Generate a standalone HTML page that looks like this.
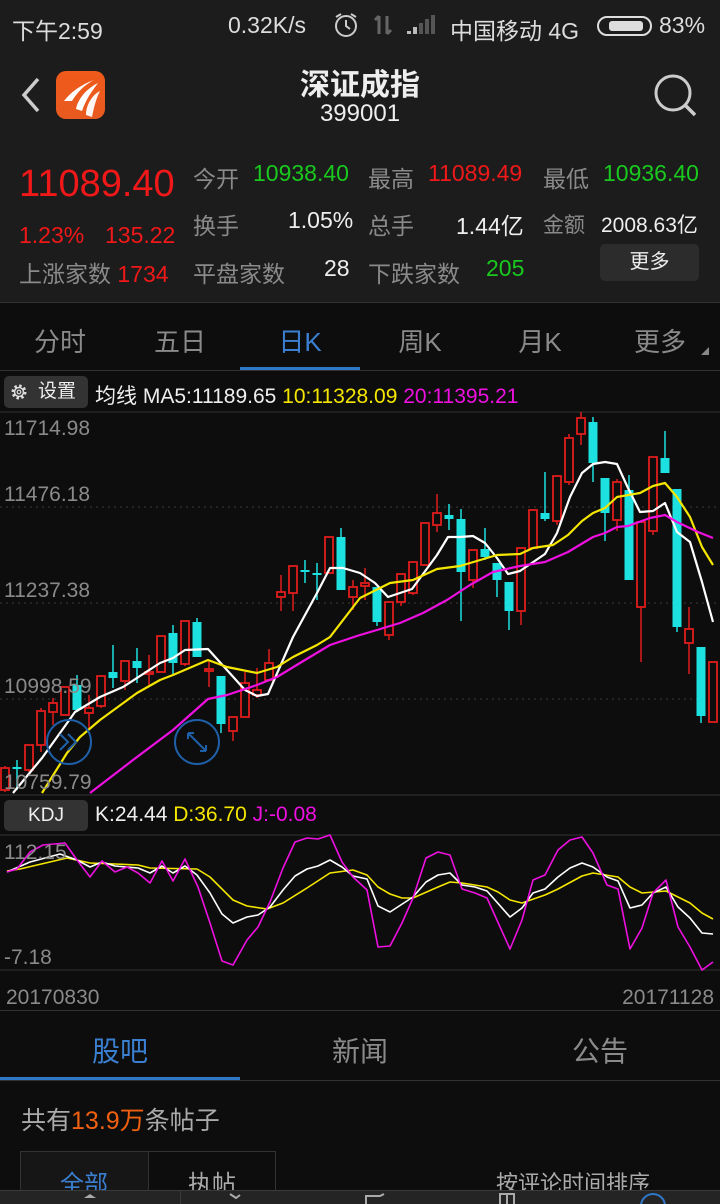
<!DOCTYPE html>
<html><head><meta charset="utf-8">
<style>
*{margin:0;padding:0;box-sizing:border-box}
body{width:720px;height:1204px;overflow:hidden;background:#0d0d0d;font-family:"Liberation Sans","Noto Sans CJK SC",sans-serif;color:#ddd;position:relative}
.a{position:absolute;white-space:nowrap}
.g{color:#8a8a8a}
.r{color:#f01818}
.gr{color:#19c91e}
.w{color:#eee}
</style></head><body>
<div class="a" style="left:0;top:0;width:720px;height:302px;background:#1c1c1c"></div>
<!-- status bar -->
<div class="a" style="left:12px;top:12px;font-size:23px;color:#ddd">下午2:59</div>
<div class="a" style="left:228px;top:12px;font-size:23px;color:#ddd">0.32K/s</div>
<svg class="a" style="left:332px;top:12px" width="28" height="26" viewBox="0 0 28 26"><circle cx="14" cy="14" r="10" fill="none" stroke="#ccc" stroke-width="2"/><path d="M14 8v6l4 3M4 5l5-3M24 5l-5-3" stroke="#ccc" stroke-width="2" fill="none"/></svg>
<svg class="a" style="left:372px;top:14px" width="22" height="22"><path d="M7 2v18M3 6l4-4M15 2v18M19 16l-4 4" stroke="#666" stroke-width="3" fill="none"/></svg>
<svg class="a" style="left:405px;top:14px" width="32" height="22"><path d="M2 20h4v-3H2zM8 20h4v-7H8zM14 20h4V9h-4zM20 20h4V5h-4zM26 20h4V1h-4z" fill="#555"/><path d="M2 20h4v-3H2zM8 20h4v-7H8z" fill="#bbb"/></svg>
<div class="a" style="left:450px;top:12px;font-size:23px;color:#ddd">中国移动 4G</div>
<div class="a" style="left:597px;top:16px;width:55px;height:20px;border:2px solid #ddd;border-radius:10px"><div style="position:absolute;left:10px;top:3px;width:34px;height:10px;background:#ddd;border-radius:3px"></div></div>
<div class="a" style="left:659px;top:12px;font-size:23px;color:#ddd">83%</div>
<!-- header -->
<svg class="a" style="left:18px;top:76px" width="26" height="38"><path d="M20 3L6 19l14 16" stroke="#ccc" stroke-width="3.5" fill="none"/></svg>
<div class="a" style="left:56px;top:71px;width:49px;height:48px;border-radius:10px;background:linear-gradient(#f05a1a,#e85a20)"></div>
<svg class="a" style="left:56px;top:71px" width="49" height="48"><path d="M8 30C14 22 24 14 38 9C30 13 22 20 16 30Z" fill="#fff"/><path d="M20 38C22 28 30 18 42 12C36 20 30 28 26 40Z" fill="#fff"/><path d="M30 44C30 34 36 24 44 20C40 28 38 36 36 46Z" fill="#fff" opacity=".95"/></svg>
<div class="a" style="left:0;width:720px;top:60px;text-align:center;font-size:30px;font-weight:bold;color:#eee">深证成指</div>
<div class="a" style="left:0;width:720px;top:100px;text-align:center;font-size:24px;color:#eee">399001</div>
<svg class="a" style="left:652px;top:72px" width="46" height="48"><circle cx="21" cy="21" r="17" fill="none" stroke="#ccc" stroke-width="3"/><path d="M33 33l10 10" stroke="#ccc" stroke-width="3.5"/></svg>
<!-- quote -->
<div class="a r" style="left:19px;top:163px;font-size:38px">11089.40</div>
<div class="a r" style="left:19px;top:222px;font-size:23px">1.23%</div>
<div class="a r" style="left:105px;top:222px;font-size:23px">135.22</div>
<div class="a g" style="left:19px;top:255px;font-size:23px">上涨家数 <span class="r">1734</span></div>
<div class="a g" style="left:193px;top:160px;font-size:23px">今开</div>
<div class="a gr" style="left:253px;top:160px;font-size:23px">10938.40</div>
<div class="a g" style="left:368px;top:160px;font-size:23px">最高</div>
<div class="a r" style="left:428px;top:160px;font-size:23px">11089.49</div>
<div class="a g" style="left:543px;top:160px;font-size:23px">最低</div>
<div class="a gr" style="left:603px;top:160px;font-size:23px">10936.40</div>
<div class="a g" style="left:193px;top:207px;font-size:23px">换手</div>
<div class="a w" style="left:288px;top:207px;font-size:23px">1.05%</div>
<div class="a g" style="left:368px;top:207px;font-size:23px">总手</div>
<div class="a w" style="left:456px;top:207px;font-size:23px">1.44亿</div>
<div class="a g" style="left:543px;top:209px;font-size:21px">金额</div>
<div class="a w" style="left:601px;top:209px;font-size:21px">2008.63亿</div>
<div class="a g" style="left:193px;top:255px;font-size:23px">平盘家数</div>
<div class="a w" style="left:324px;top:255px;font-size:23px">28</div>
<div class="a g" style="left:368px;top:255px;font-size:23px">下跌家数</div>
<div class="a gr" style="left:486px;top:255px;font-size:23px">205</div>
<div class="a" style="left:600px;top:244px;width:99px;height:37px;background:#2c2c2c;border-radius:5px;text-align:center;line-height:37px;font-size:20px;color:#eee">更多</div>
<!-- tabs -->
<div class="a" style="left:0;top:302px;width:720px;height:1px;background:#333"></div>
<div class="a g" style="left:0;top:322px;width:120px;text-align:center;font-size:26px">分时</div>
<div class="a g" style="left:120px;top:322px;width:120px;text-align:center;font-size:26px">五日</div>
<div class="a" style="left:240px;top:322px;width:120px;text-align:center;font-size:26px;color:#3a7fd0">日K</div>
<div class="a g" style="left:360px;top:322px;width:120px;text-align:center;font-size:26px">周K</div>
<div class="a g" style="left:480px;top:322px;width:120px;text-align:center;font-size:26px">月K</div>
<div class="a g" style="left:600px;top:322px;width:120px;text-align:center;font-size:26px">更多</div>
<svg class="a" style="left:700px;top:346px" width="10" height="10"><path d="M9 1V9H1Z" fill="#888"/></svg>
<div class="a" style="left:240px;top:367px;width:120px;height:4px;background:#2f78c8"></div>
<div class="a" style="left:0;top:370px;width:720px;height:1px;background:#333"></div>
<div class="a" style="left:4px;top:376px;width:84px;height:32px;background:#333;border-radius:5px;font-size:19px;line-height:32px;color:#eee;padding-left:34px">设置</div>
<svg class="a" style="left:10px;top:383px" width="18" height="18" viewBox="0 0 18 18"><circle cx="9" cy="9" r="6" fill="none" stroke="#ddd" stroke-width="3" stroke-dasharray="2.4 2.3"/><circle cx="9" cy="9" r="4.5" fill="none" stroke="#ddd" stroke-width="1.5"/><circle cx="9" cy="9" r="1.8" fill="none" stroke="#ddd" stroke-width="1.2"/></svg>
<div class="a" style="left:95px;top:380px;font-size:21px;color:#eee">均线 MA5:11189.65 <span style="color:#f5e600">10:11328.09</span> <span style="color:#ee10e0">20:11395.21</span></div>
<svg class="a" style="left:0;top:0" width="720" height="1204" id="ch"></svg>
<div class="a g" style="left:4px;top:417px;font-size:21px">11714.98</div>
<div class="a g" style="left:4px;top:483px;font-size:21px">11476.18</div>
<div class="a g" style="left:4px;top:579px;font-size:21px">11237.38</div>
<div class="a g" style="left:4px;top:675px;font-size:21px">10998.59</div>
<div class="a g" style="left:4px;top:771px;font-size:21px">10759.79</div>
<div class="a" style="left:4px;top:800px;width:84px;height:31px;background:#333;border-radius:5px;font-size:19px;line-height:31px;color:#eee;text-align:center">KDJ</div>
<div class="a" style="left:95px;top:803px;font-size:21px;color:#eee">K:24.44 <span style="color:#f5e600">D:36.70</span> <span style="color:#ee10e0">J:-0.08</span></div>
<div class="a g" style="left:4px;top:841px;font-size:21px">112.15</div>
<div class="a g" style="left:4px;top:946px;font-size:21px">-7.18</div>
<div class="a g" style="left:6px;top:986px;font-size:21px">20170830</div>
<div class="a g" style="right:6px;top:986px;font-size:21px">20171128</div>
<div class="a" style="left:0;top:1010px;width:720px;height:1px;background:#333"></div>
<!-- bottom tabs -->
<div class="a" style="left:0;top:1030px;width:240px;text-align:center;font-size:28px;color:#3a7fd0">股吧</div>
<div class="a g" style="left:240px;top:1030px;width:240px;text-align:center;font-size:28px">新闻</div>
<div class="a g" style="left:480px;top:1030px;width:240px;text-align:center;font-size:28px">公告</div>
<div class="a" style="left:0;top:1077px;width:240px;height:4px;background:#2f78c8"></div>
<div class="a" style="left:0;top:1080px;width:720px;height:1px;background:#333"></div>
<div class="a" style="left:21px;top:1101px;font-size:25px;color:#aaa">共有<span style="color:#f06010">13.9万</span>条帖子</div>
<div class="a" style="left:20px;top:1151px;width:256px;height:50px;border:1px solid #333"></div>
<div class="a" style="left:21px;top:1152px;width:127px;height:48px;background:#161616"></div>
<div class="a" style="left:148px;top:1151px;width:1px;height:50px;background:#333"></div>
<div class="a" style="left:20px;top:1164px;width:128px;text-align:center;font-size:24px;color:#3a7fd0">全部</div>
<div class="a" style="left:148px;top:1164px;width:128px;text-align:center;font-size:24px;color:#aaa">执帖</div>
<div class="a" style="left:496px;top:1166px;font-size:22px;color:#aaa">按评论时间排序</div>
<div class="a" style="left:0;top:1190px;width:720px;height:14px;background:#242424;border-top:1px solid #3a3a3a"></div>
<div class="a" style="left:180px;top:1191px;width:1px;height:13px;background:#3a3a3a"></div>
<svg class="a" style="left:0;top:1190px" width="720" height="14"><path d="M84 8l6-4 6 4z" fill="#aaa"/><path d="M230 4l6 4 4-3" stroke="#aaa" stroke-width="2" fill="none"/><path d="M366 14v-8h14l4-2" stroke="#aaa" stroke-width="2" fill="none"/><path d="M500 14V4h14v10M507 4v10" stroke="#aaa" stroke-width="2" fill="none"/><circle cx="653" cy="16" r="12" fill="none" stroke="#2f78c8" stroke-width="2"/></svg>
<script>
var s='';
function L(y,d){s+='<line x1="0" x2="720" y1="'+y+'" y2="'+y+'" stroke="'+(d?'#3a3a3a':'#333')+'" '+(d?'stroke-dasharray="2 4"':'')+'/>';}
L(412);L(507,1);L(603,1);L(699,1);L(795);L(835);L(970);
var c=[[5,768,790,766,792,'r'],[17,767,769,760,790,'c'],[29,745,770,745,772,'r'],[41,711,745,708,752,'r'],[53,703,712,698,725,'r'],[65,687,715,687,715,'r'],[77,685,710,675,712,'c'],[89,708,713,695,730,'r'],[101,676,706,676,708,'r'],[113,672,678,645,688,'c'],[125,661,681,661,690,'r'],[137,661,668,648,683,'c'],[149,672,674,655,687,'r'],[161,636,672,636,672,'r'],[173,633,663,625,675,'c'],[185,621,664,621,666,'r'],[197,622,657,618,657,'c'],[209,669,671,660,687,'r'],[221,676,724,676,733,'c'],[233,717,731,717,741,'r'],[245,683,717,672,717,'r'],[257,690,695,668,698,'r'],[269,663,680,649,680,'r'],[281,592,597,575,611,'r'],[293,566,593,566,611,'r'],[305,570,572,560,583,'c'],[317,573,575,563,600,'c'],[329,537,573,537,573,'r'],[341,537,590,528,590,'c'],[353,587,597,580,610,'r'],[365,583,586,568,600,'r'],[377,587,622,587,626,'c'],[389,602,635,602,640,'r'],[401,574,602,574,606,'r'],[413,562,593,562,595,'r'],[425,523,565,523,565,'r'],[437,513,525,494,532,'r'],[449,515,519,504,530,'c'],[461,519,572,509,621,'c'],[473,550,580,550,588,'r'],[485,549,557,528,560,'c'],[497,563,580,563,597,'c'],[509,582,611,582,630,'c'],[521,548,611,548,625,'r'],[533,510,548,510,548,'r'],[545,513,519,472,521,'c'],[557,476,521,476,525,'r'],[569,438,482,434,485,'r'],[581,418,434,412,445,'r'],[593,422,463,417,482,'c'],[605,478,513,478,541,'c'],[617,482,520,479,531,'r'],[629,490,580,475,580,'c'],[641,522,607,522,662,'r'],[653,457,531,457,535,'r'],[665,458,473,431,473,'c'],[677,489,627,489,632,'c'],[689,629,643,607,674,'r'],[701,647,716,647,723,'c'],[713,662,722,662,722,'r']];
c.forEach(function(k){var x=k[0],col=k[5]=='r'?'#e01c1c':'#1de0e0';
s+='<line x1="'+x+'" x2="'+x+'" y1="'+k[3]+'" y2="'+k[4]+'" stroke="'+col+'" stroke-width="1.5"/>';
var h=Math.max(k[2]-k[1],2);
if(k[5]=='r'){s+='<rect x="'+(x-4)+'" y="'+k[1]+'" width="8" height="'+h+'" fill="#0d0d0d" stroke="'+col+'" stroke-width="1.8"/>';}
else s+='<rect x="'+(x-4.5)+'" y="'+k[1]+'" width="9" height="'+h+'" fill="'+col+'"/>';});
function P(p,col){s+='<polyline fill="none" stroke="'+col+'" stroke-width="2.2" stroke-linejoin="round" points="'+p+'"/>';}
P('13,793 42,758 60,733 75,712 100,697 123,687 160,663 173,658 185,650 208,649 245,690 257,696 268,694 293,637 317,593 330,568 343,568 360,573 375,583 388,597 412,589 437,555 448,537 460,537 473,536 485,543 497,558 508,574 520,571 545,554 557,533 570,497 582,473 593,464 605,462 617,464 628,488 640,512 653,511 665,503 677,532 690,542 702,582 713,622','#fff');
P('42,793 67,753 80,737 100,720 137,693 160,680 173,675 208,660 227,667 257,673 277,667 293,657 317,645 330,637 360,598 390,583 413,580 437,569 460,566 497,555 520,554 533,548 553,545 568,535 582,521 593,513 605,508 617,497 640,493 653,486 665,483 677,497 690,517 702,547 713,565','#f5e600');
P('90,793 133,760 173,730 208,699 227,695 257,685 277,677 300,663 330,645 360,635 377,630 400,623 423,613 447,600 470,585 493,572 520,566 545,562 568,552 593,537 605,533 617,527 628,526 650,518 665,515 677,522 698,532 713,538','#ee10e0');
function Q(p,col){s+='<polyline fill="none" stroke="'+col+'" stroke-width="1.6" stroke-linejoin="round" points="'+p+'"/>';}
Q('7,871 20,869 67,858 90,863 115,864 138,865 150,868 197,869 210,877 233,900 247,906 267,909 283,903 307,888 330,873 353,870 367,875 378,887 390,894 402,898 413,898 438,887 450,882 462,883 487,887 498,892 510,900 522,903 545,895 558,889 582,876 593,873 618,877 630,887 642,893 666,891 690,903 702,913 713,919','#f5e600');
Q('7,872 30,862 60,854 77,860 90,867 102,862 115,866 138,868 150,873 162,866 173,873 185,866 197,875 210,893 222,914 233,923 247,917 258,915 270,907 283,890 295,876 307,869 318,866 330,860 342,867 353,876 367,879 378,906 390,912 413,897 426,882 438,875 450,873 462,885 475,887 487,891 510,917 522,908 533,893 545,889 558,877 570,868 582,863 593,867 607,877 618,881 630,908 642,905 653,893 666,887 678,907 690,918 702,933 713,934','#fff');
Q('7,872 17,869 30,852 43,845 65,843 77,860 90,877 102,861 115,872 127,867 138,873 150,883 162,861 173,881 185,859 198,887 210,923 222,961 233,965 247,940 258,927 270,902 283,868 295,842 307,838 318,839 330,835 342,862 353,877 367,890 378,947 390,946 402,923 413,898 426,858 438,852 450,855 462,889 475,893 487,898 510,949 522,920 533,880 545,875 558,850 570,840 582,837 593,853 607,885 618,889 630,949 642,928 653,893 666,880 678,927 690,947 702,970 713,962','#ee10e0');
s+='<g stroke="#1f5fa8" stroke-width="2" fill="none"><circle cx="69" cy="742" r="22"/><path d="M60 734l8 8-8 8M68 734l8 8-8 8"/><circle cx="197" cy="742" r="22"/><path d="M188 733l18 18M188 733v6M188 733h6M206 751v-6M206 751h-6"/></g>';
document.getElementById('ch').innerHTML=s;
</script>
</body></html>
